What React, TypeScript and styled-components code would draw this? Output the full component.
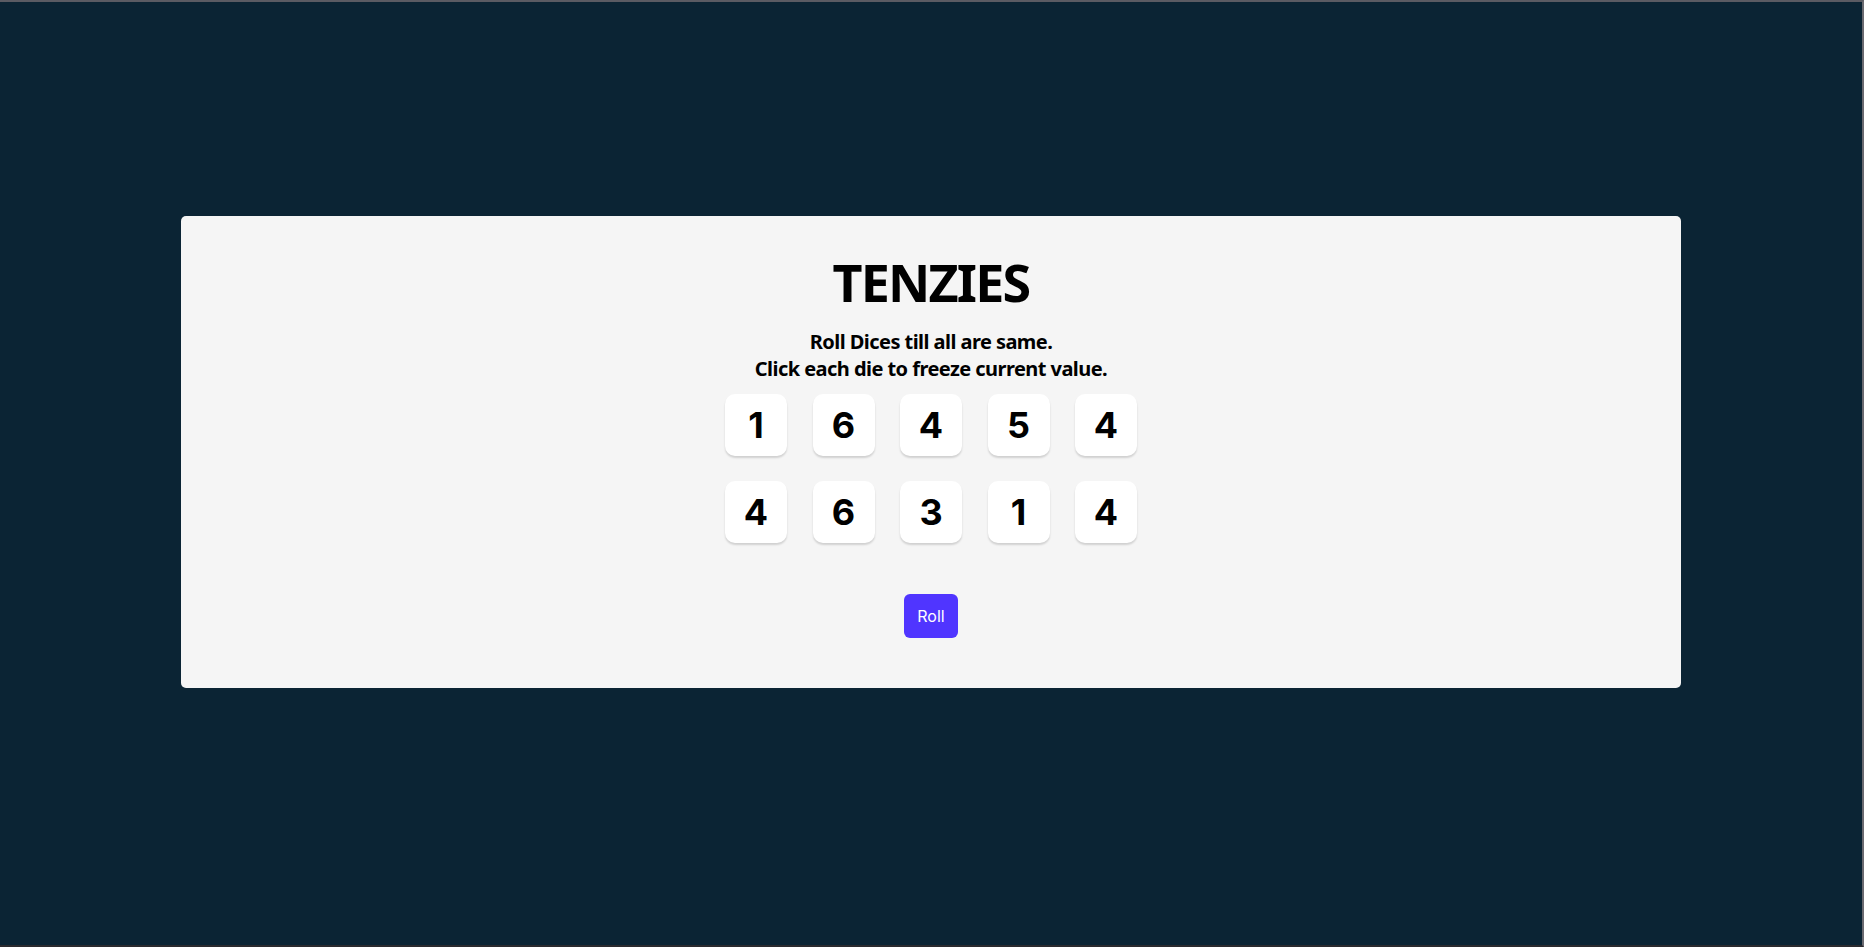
import React, { useState } from "react";
import styled, { createGlobalStyle } from "styled-components";

const GlobalStyle = createGlobalStyle`
  html, body {
    margin: 0;
    padding: 0;
    height: 100%;
  }
  body {
    background: #0b2434;
    font-family: "Noto Sans", "Open Sans", sans-serif;
  }
`;

type Die = {
  id: number;
  value: number;
  isHeld: boolean;
};

const START_VALUES = [1, 6, 4, 5, 4, 4, 6, 3, 1, 4];

const App = () => {
  const [dice, setDice] = useState<Die[]>(
    START_VALUES.map((value, id) => ({ id, value, isHeld: false }))
  );

  const holdDie = (id: number) => {
    setDice((old) =>
      old.map((die) => (die.id === id ? { ...die, isHeld: !die.isHeld } : die))
    );
  };

  const rollDice = () => {
    setDice((old) =>
      old.map((die) =>
        die.isHeld ? die : { ...die, value: Math.ceil(Math.random() * 6) }
      )
    );
  };

  return (
    <>
      <GlobalStyle />
      <Screen>
        <Board>
          <Title>TENZIES</Title>
          <Instructions>
            Roll Dices till all are same.
            <br />
            Click each die to freeze current value.
          </Instructions>
          <DiceGrid>
            {dice.map((die) => (
              <DieFace
                key={die.id}
                held={die.isHeld}
                onClick={() => holdDie(die.id)}
              >
                {die.value}
              </DieFace>
            ))}
          </DiceGrid>
          <RollButton onClick={rollDice}>Roll</RollButton>
        </Board>
      </Screen>
    </>
  );
};

export default App;

const Screen = styled.div`
  box-sizing: border-box;
  height: 947px;
  padding-top: 214px;
  border-top: 2px solid #5b5b63;
  border-right: 2px solid #6a6a70;
  border-bottom: 2px solid #2a2a2e;
  overflow: hidden;
`;

const Board = styled.main`
  box-sizing: border-box;
  width: 1500px;
  height: 472px;
  margin: 0 auto;
  padding-top: 36px;
  background: #f5f5f5;
  border-radius: 5px;
  display: flex;
  flex-direction: column;
  align-items: center;
`;

const Title = styled.h1`
  margin: 0;
  font-size: 52px;
  line-height: 60px;
  font-weight: 700;
  letter-spacing: -1.8px;
  color: #000000;
`;

const Instructions = styled.p`
  margin: 16px 0 0;
  font-size: 20px;
  line-height: 27px;
  font-weight: 700;
  letter-spacing: -0.55px;
  text-align: center;
  color: #000000;
`;

const DiceGrid = styled.div`
  margin-top: 12px;
  display: grid;
  grid-template-columns: repeat(5, 62px);
  grid-auto-rows: 62px;
  column-gap: 25.5px;
  row-gap: 25px;
`;

const DieFace = styled.div<{ held: boolean }>`
  display: flex;
  align-items: center;
  justify-content: center;
  border-radius: 10px;
  background: ${(props) => (props.held ? "#59e391" : "#ffffff")};
  box-shadow: 0 2px 2px rgba(0, 0, 0, 0.15);
  font-family: "Inter", sans-serif;
  font-size: 36px;
  font-weight: 700;
  color: #000000;
  cursor: pointer;
  user-select: none;
`;

const RollButton = styled.button`
  margin-top: 51px;
  height: 44px;
  padding: 0 13px;
  border: none;
  border-radius: 6px;
  background: #5035ff;
  color: #ffffff;
  font-family: "Inter", sans-serif;
  font-size: 16px;
  font-weight: 400;
  cursor: pointer;
`;
